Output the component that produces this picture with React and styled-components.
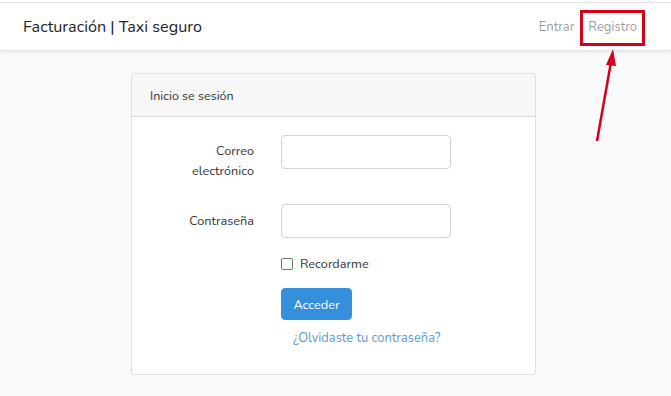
import React from "react";
import styled, { createGlobalStyle } from "styled-components";

const Global = createGlobalStyle`
  html, body { margin: 0; padding: 0; }
  body {
    background: #f8fafc;
    font-family: Nunito, "Noto Sans", Lato, sans-serif;
    color: #212529;
    width: 671px;
    height: 396px;
    overflow: hidden;
  }
`;

const Page = styled.div`
  position: relative;
  width: 671px;
  height: 396px;
  border-top: 2px solid #fff;
`;

const Nav = styled.nav`
  height: 47px;
  background: #fff;
  border-top: 1px solid #e3e3e3;
  box-shadow: 0 2px 3px rgba(0, 0, 0, 0.06);
  border-bottom: 1px solid #e6e6e6;
  display: flex;
  align-items: center;
  justify-content: space-between;
  padding: 0 34px 0 23px;
`;

const Brand = styled.div`
  font-size: 16.2px;
  color: #212529;
`;

const NavLinks = styled.div`
  display: flex;
  gap: 14px;
  font-size: 13px;
  color: rgba(0, 0, 0, 0.42);
`;

const Main = styled.main`
  display: flex;
  justify-content: center;
  padding-top: 22px;
  padding-right: 4px;
`;

const Card = styled.div`
  width: 403px;
  background: #fff;
  border: 1px solid rgba(0, 0, 0, 0.125);
  border-radius: 3px;
`;

const CardHeader = styled.div`
  height: 42px;
  display: flex;
  align-items: center;
  padding: 0 18px;
  background: #f7f7f7;
  border-bottom: 1px solid rgba(0, 0, 0, 0.125);
  font-size: 12.5px;
  color: #333;
`;

const CardBody = styled.div`
  padding: 18px 0 27px;
`;

const Row = styled.div`
  display: grid;
  grid-template-columns: 122px 170px;
  column-gap: 27px;
  margin-bottom: ${(p) => p.mb || 0}px;
  align-items: ${(p) => (p.top ? "start" : "center")};
`;

const Label = styled.label`
  text-align: right;
  font-size: 12.7px;
  line-height: 20px;
  color: #333;
  padding-top: ${(p) => p.pt || 0}px;
`;

const Input = styled.input`
  box-sizing: border-box;
  width: 170px;
  height: 34px;
  border: 1px solid #ced4da;
  border-radius: 4px;
  background: #fff;
`;

const Check = styled.label`
  display: flex;
  align-items: center;
  gap: 7px;
  font-size: 12.7px;
  color: #333;
`;

const Box = styled.span`
  width: 10px;
  height: 10px;
  border: 1px solid #767676;
  border-radius: 2px;
  background: #fff;
`;

const Button = styled.button`
  width: 71px;
  height: 32px;
  background: #3490dc;
  border: 1px solid #3490dc;
  border-radius: 4px;
  color: #fff;
  font-family: inherit;
  font-size: 12.7px;
  padding: 0;
`;

const Link = styled.a`
  display: block;
  font-size: 12.9px;
  color: #5a9ad6;
  padding-left: 12px;
  margin-top: 9px;
`;

const Annotation = styled.svg`
  position: absolute;
  left: 0;
  top: 0;
  pointer-events: none;
`;

export default function App() {
  return (
    <Page>
      <Global />
      <Nav>
        <Brand>Facturación | Taxi seguro</Brand>
        <NavLinks>
          <span>Entrar</span>
          <span>Registro</span>
        </NavLinks>
      </Nav>
      <Main>
        <Card>
          <CardHeader>Inicio se sesión</CardHeader>
          <CardBody>
            <Row mb={23} top>
              <Label pt={6}>Correo<br />electrónico</Label>
              <Input />
            </Row>
            <Row mb={17}>
              <Label>Contraseña</Label>
              <Input type="password" />
            </Row>
            <Row mb={16}>
              <span />
              <Check><Box />Recordarme</Check>
            </Row>
            <Row>
              <span />
              <div>
                <Button>Acceder</Button>
                <Link>¿Olvidaste tu contraseña?</Link>
              </div>
            </Row>
          </CardBody>
        </Card>
      </Main>
      <Annotation width="671" height="396" viewBox="0 0 671 396">
        <rect x="581.5" y="9.5" width="62" height="33" fill="none" stroke="#d4001a" strokeWidth="3" />
        <line x1="597" y1="139" x2="611" y2="60" stroke="#d4001a" strokeWidth="2.5" />
        <polygon points="613,47 606,63 616,64" fill="#d4001a" />
      </Annotation>
    </Page>
  );
}
